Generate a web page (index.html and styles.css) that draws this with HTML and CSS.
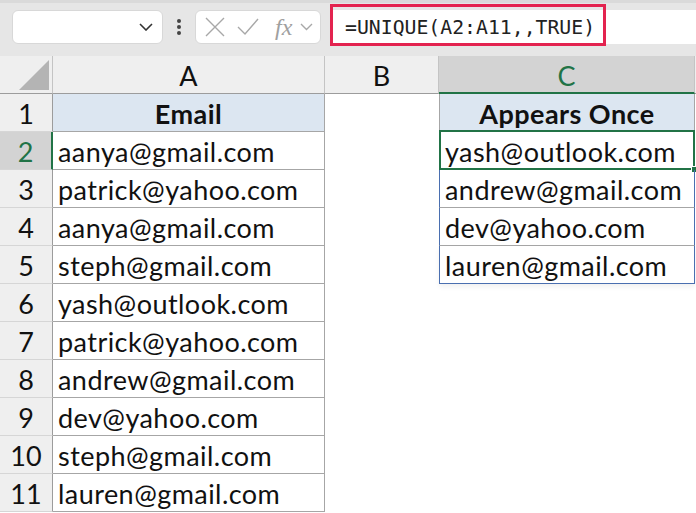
FILE: index.html
```html
<!DOCTYPE html>
<html lang="en">

<head>
	<meta charset="UTF-8">
	<title>UNIQUE - Appears Once</title>
	<link rel="stylesheet" href="styles.css">
</head>

<body>
	<div class="toolbar">
		<div class="namebox">
			<svg class="chev" width="14" height="8" viewBox="0 0 14 8"><path d="M1 1l6 6 6-6" fill="none" stroke="#333" stroke-width="1.6"/></svg>
		</div>
		<div class="grip">
			<svg width="6" height="18" viewBox="0 0 6 18"><circle cx="3" cy="3" r="2" fill="#444"/><circle cx="3" cy="9" r="2" fill="#444"/><circle cx="3" cy="15" r="2" fill="#444"/></svg>
		</div>
		<div class="fxbox">
			<svg width="20" height="20" viewBox="0 0 20 20"><path d="M1 1l18 18M19 1L1 19" stroke="#a8a8a8" stroke-width="1.4"/></svg>
			<svg width="22" height="18" viewBox="0 0 22 18"><path d="M1 9l7 7L21 1" fill="none" stroke="#a8a8a8" stroke-width="1.4"/></svg>
			<span class="fx">fx</span>
			<svg width="13" height="8" viewBox="0 0 13 8"><path d="M1 1l5.5 5.5L12 1" fill="none" stroke="#a8a8a8" stroke-width="1.4"/></svg>
		</div>
		<div class="formula">
			<span class="formula-text">=UNIQUE(A2:A11,,TRUE)</span>
			<div class="highlight"></div>
		</div>
	</div>

	<div class="sheet">
		<!-- header row -->
		<div class="corner">
			<svg width="30" height="30" viewBox="0 0 30 30"><path d="M30 0V30H0Z" fill="#b4b4b4"/></svg>
		</div>
		<div class="col-head">A</div>
		<div class="col-head">B</div>
		<div class="col-head active">C</div>
		<div class="col-head"></div>

		<div class="row-head">1</div>
		<div class="cell boxed title">Email</div>
		<div class="cell"></div>
		<div class="cell boxed left title">Appears Once</div>
		<div class="cell"></div>

		<div class="row-head active">2</div>
		<div class="cell boxed">aanya@gmail.com</div>
		<div class="cell"></div>
		<div class="cell boxed left spill selected">yash@outlook.com<span class="handle"></span></div>
		<div class="cell"></div>

		<div class="row-head">3</div>
		<div class="cell boxed">patrick@yahoo.com</div>
		<div class="cell"></div>
		<div class="cell boxed left spill">andrew@gmail.com</div>
		<div class="cell"></div>

		<div class="row-head">4</div>
		<div class="cell boxed">aanya@gmail.com</div>
		<div class="cell"></div>
		<div class="cell boxed left spill">dev@yahoo.com</div>
		<div class="cell"></div>

		<div class="row-head">5</div>
		<div class="cell boxed">steph@gmail.com</div>
		<div class="cell"></div>
		<div class="cell boxed left spill spill-end">lauren@gmail.com</div>
		<div class="cell"></div>

		<div class="row-head">6</div>
		<div class="cell boxed">yash@outlook.com</div>
		<div class="cell"></div>
		<div class="cell"></div>
		<div class="cell"></div>

		<div class="row-head">7</div>
		<div class="cell boxed">patrick@yahoo.com</div>
		<div class="cell"></div>
		<div class="cell"></div>
		<div class="cell"></div>

		<div class="row-head">8</div>
		<div class="cell boxed">andrew@gmail.com</div>
		<div class="cell"></div>
		<div class="cell"></div>
		<div class="cell"></div>

		<div class="row-head">9</div>
		<div class="cell boxed">dev@yahoo.com</div>
		<div class="cell"></div>
		<div class="cell"></div>
		<div class="cell"></div>

		<div class="row-head">10</div>
		<div class="cell boxed">steph@gmail.com</div>
		<div class="cell"></div>
		<div class="cell"></div>
		<div class="cell"></div>

		<div class="row-head">11</div>
		<div class="cell boxed">lauren@gmail.com</div>
		<div class="cell"></div>
		<div class="cell"></div>
		<div class="cell"></div>
	</div>
</body>

</html>
```

FILE: styles.css
```css
* {
	box-sizing: border-box;
}

body {
	margin: 0;
	width: 696px;
	height: 513px;
	overflow: hidden;
	background: #fff;
	font-family: Lato, "Noto Sans", sans-serif;
	color: #111;
}

/* formula bar */
.toolbar {
	display: flex;
	align-items: center;
	height: 56px;
	padding: 5px 0 10px 12px;
	background: #e6e6e6;
	border-top: 3px solid #dadada;
}

.namebox {
	display: flex;
	align-items: center;
	justify-content: flex-end;
	width: 151px;
	height: 34px;
	padding-right: 9px;
	background: #fff;
	border: 1px solid #d8d8d8;
	border-radius: 6px;
}

.grip {
	display: flex;
	justify-content: center;
	width: 32px;
}

.fxbox {
	display: flex;
	align-items: center;
	gap: 12px;
	width: 126px;
	height: 34px;
	padding-left: 9px;
	background: #fff;
	border: 1px solid #d8d8d8;
	border-radius: 6px;
}

.fxbox .fx {
	font: italic 24px "Liberation Serif", serif;
	color: #a0a0a0;
	margin-left: 4px;
	margin-right: -4px;
}

.formula {
	position: relative;
	display: flex;
	align-items: center;
	flex: 1;
	height: 34px;
	margin-left: 12px;
	padding-left: 12px;
	background: #fff;
}

.formula-text {
	font: 19.8px "DejaVu Sans Mono", monospace;
	color: #222;
}

/* red annotation box round the formula */
.highlight {
	position: absolute;
	left: -3px;
	top: -6px;
	width: 276px;
	height: 42px;
	border: 3px solid #e3234f;
}

/* grid */
.sheet {
	display: grid;
	grid-template-columns: 53px 272px 114px 256px 1fr;
	grid-template-rows: repeat(12, 38px);
	font-size: 27px;
}

.corner {
	display: flex;
	align-items: flex-end;
	justify-content: flex-end;
	padding: 0 3px 3px 0;
	background: #efefef;
	border-right: 1px solid #c4c4c4;
	border-bottom: 1px solid #9c9c9c;
}

.col-head {
	display: flex;
	align-items: center;
	justify-content: center;
	padding-top: 2px;
	background: #efefef;
	border-right: 1px solid #c4c4c4;
	border-bottom: 1px solid #9c9c9c;
}

.col-head.active {
	background: #d3d3d3;
	color: #217346;
	border-bottom: 2px solid #217346;
}

.row-head {
	display: flex;
	align-items: center;
	justify-content: center;
	padding-top: 2px;
	background: #efefef;
	border-right: 1px solid #9c9c9c;
	border-bottom: 1px solid #d6d6d6;
}

.row-head.active {
	background: #d3d3d3;
	color: #217346;
	border-right: 2px solid #217346;
}

.cell {
	position: relative;
	display: flex;
	align-items: center;
	padding: 2px 0 0 5px;
	white-space: nowrap;
	letter-spacing: 0.45px;
}

.cell.boxed {
	border-right: 1px solid #a6a6a6;
	border-bottom: 1px solid #a6a6a6;
}

.cell.left {
	border-left: 1px solid #a6a6a6;
}

.cell.title {
	justify-content: center;
	padding-left: 0;
	font-weight: 700;
	background: #dce6f1;
}

.cell.spill {
	border-left-color: #4a6fb0;
	border-right-color: #4a6fb0;
}

.cell.spill-end {
	border-bottom-color: #4a6fb0;
	box-shadow: 0 3px 5px rgba(0, 0, 0, 0.06);
}

/* active cell frame */
.cell.selected::before {
	content: "";
	position: absolute;
	top: -2px;
	left: -1px;
	right: -1px;
	bottom: -1px;
	border: 2px solid #217346;
}

.handle {
	position: absolute;
	right: -4px;
	bottom: -4px;
	width: 7px;
	height: 7px;
	background: #217346;
	border: 1px solid #fff;
}
```
